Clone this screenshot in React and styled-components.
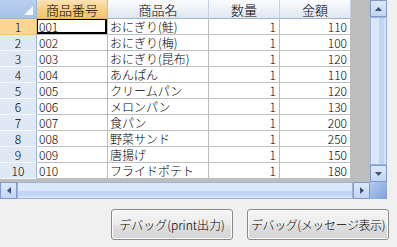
import React from "react";
import styled, { createGlobalStyle } from "styled-components";

const items = [
  ["001", "おにぎり(鮭)", 1, 110],
  ["002", "おにぎり(梅)", 1, 100],
  ["003", "おにぎり(昆布)", 1, 120],
  ["004", "あんぱん", 1, 110],
  ["005", "クリームパン", 1, 120],
  ["006", "メロンパン", 1, 130],
  ["007", "食パン", 1, 200],
  ["008", "野菜サンド", 1, 250],
  ["009", "唐揚げ", 1, 150],
  ["010", "フライドポテト", 1, 180],
];

const columns = ["商品番号", "商品名", "数量", "金額"];

const App = () => {
  return (
    <>
      <GlobalStyle />
      <Form>
        <GridView>
          <GridMain>
            <Table>
              <Corner>
                <CornerMark />
              </Corner>
              {columns.map((c, i) => (
                <ColumnHeader key={c} selected={i === 0}>
                  {c}
                </ColumnHeader>
              ))}
              {items.map((row, r) => (
                <React.Fragment key={row[0]}>
                  <RowHeader selected={r === 0}>{r + 1}</RowHeader>
                  <Cell current={r === 0}>{row[0]}</Cell>
                  <Cell>{row[1]}</Cell>
                  <Cell align="right">{row[2]}</Cell>
                  <Cell align="right">{row[3]}</Cell>
                </React.Fragment>
              ))}
            </Table>
            <VScroll>
              <ArrowButton>
                <Arrow dir="up" />
              </ArrowButton>
              <Thumb vertical />
              <ArrowButton>
                <Arrow dir="down" />
              </ArrowButton>
            </VScroll>
          </GridMain>
          <GridBottom>
            <HScroll>
              <ArrowButton>
                <Arrow dir="left" />
              </ArrowButton>
              <Thumb />
              <ArrowButton>
                <Arrow dir="right" />
              </ArrowButton>
            </HScroll>
            <SizeCorner />
          </GridBottom>
        </GridView>
        <ButtonBar>
          <Button width={122}>デバッグ(print出力)</Button>
          <Button width={142} tight>
            デバッグ(メッセージ表示)
          </Button>
        </ButtonBar>
      </Form>
    </>
  );
};

const Arrow = ({ dir }) => {
  const pts = {
    up: "0,4 7,4 3.5,0",
    down: "0,0 7,0 3.5,4",
    left: "4,0 4,7 0,3.5",
    right: "0,0 0,7 4,3.5",
  }[dir];
  const vertical = dir === "up" || dir === "down";
  return (
    <svg width={vertical ? 7 : 4} height={vertical ? 4 : 7}>
      <polygon points={pts} fill="#3f5274" />
    </svg>
  );
};

const GlobalStyle = createGlobalStyle`
  body {
    margin: 0;
    background: #f0f0f0;
    font-family: "Noto Sans CJK JP", "Noto Sans", sans-serif;
    font-weight: 300;
    font-size: 12px;
    color: #000;
  }
`;

const Form = styled.div`
  width: 397px;
  height: 247px;
  display: flex;
  flex-direction: column;
`;

const GridView = styled.div`
  width: 387px;
  height: 199px;
  display: flex;
  flex-direction: column;
  background: #bdbdbd;
`;

const GridMain = styled.div`
  display: flex;
  height: 182px;
`;

const Table = styled.div`
  flex: 1;
  display: grid;
  grid-template-columns: 37px 71px 101px 71px 71px;
  grid-template-rows: 19px repeat(10, 16px);
  align-content: start;
`;

const Corner = styled.div`
  position: relative;
  background: linear-gradient(#b9cfee, #a6c1e8);
  border-right: 1px solid #9eb6ce;
  border-bottom: 1px solid #9eb6ce;
`;

const CornerMark = styled.div`
  position: absolute;
  right: 3px;
  bottom: 3px;
  width: 0;
  height: 0;
  border-left: 9px solid transparent;
  border-bottom: 9px solid #f4f8fd;
`;

const ColumnHeader = styled.div`
  display: flex;
  align-items: center;
  justify-content: center;
  font-size: 13px;
  line-height: 19px;
  background: ${(p) =>
    p.selected
      ? "linear-gradient(#fbe3b5, #f6cd7f 60%, #f3c46c)"
      : "linear-gradient(#fbfcfe, #eaeff6 60%, #dfe6ef)"};
  border-right: 1px solid ${(p) => (p.selected ? "#f2b650" : "#c5d2e3")};
  border-bottom: 1px solid ${(p) => (p.selected ? "#f2b650" : "#9eb6ce")};
`;

const RowHeader = styled.div`
  display: flex;
  align-items: center;
  justify-content: center;
  line-height: 16px;
  background: ${(p) => (p.selected ? "#fad691" : "#dfe8f5")};
  border-right: 1px solid ${(p) => (p.selected ? "#f2b650" : "#9eb6ce")};
  border-bottom: 1px solid ${(p) => (p.selected ? "#f2c574" : "#f4f7fc")};
`;

const Cell = styled.div`
  display: flex;
  align-items: center;
  justify-content: ${(p) => (p.align === "right" ? "flex-end" : "flex-start")};
  padding: 0 3px 0 2px;
  line-height: 16px;
  white-space: nowrap;
  overflow: hidden;
  background: #fff;
  border-right: 1px solid #bcbcbc;
  border-bottom: 1px solid #bcbcbc;
  box-shadow: ${(p) =>
    p.current ? "inset 0 0 0 1px #000, inset -1px -1px 0 1px #000" : "none"};
`;

const VScroll = styled.div`
  width: 17px;
  display: flex;
  flex-direction: column;
  background: #eef3fc;
`;

const HScroll = styled.div`
  flex: 1;
  display: flex;
  background: #eef3fc;
`;

const ArrowButton = styled.div`
  flex: 0 0 17px;
  height: 17px;
  display: flex;
  align-items: center;
  justify-content: center;
  box-sizing: border-box;
  border: 1px solid #7f9ac8;
  background: linear-gradient(#dde8fa, #c3d5f3);
`;

const Thumb = styled.div`
  flex: 1;
  box-sizing: border-box;
  border: 1px solid #9db3dc;
  background: ${(p) =>
    p.vertical
      ? "linear-gradient(to right, #dbe7fb 0 50%, #c2d5f5 50% 85%, #d5e3fa 85%)"
      : "linear-gradient(#dbe7fb 0 50%, #c2d5f5 50% 85%, #d5e3fa 85%)"};
`;

const GridBottom = styled.div`
  display: flex;
  height: 17px;
`;

const SizeCorner = styled.div`
  width: 17px;
  background: linear-gradient(135deg, #b3cbef, #7f9fd6);
`;

const ButtonBar = styled.div`
  display: flex;
  justify-content: flex-end;
  gap: 14px;
  padding: 10px 8px 0 0;
`;

const Button = styled.div`
  width: ${(p) => p.width}px;
  height: 31px;
  box-sizing: border-box;
  display: flex;
  align-items: center;
  justify-content: center;
  white-space: nowrap;
  font-size: 12px;
  letter-spacing: ${(p) => (p.tight ? "-0.4px" : "0")};
  border: 1px solid #8a8a8a;
  border-radius: 3px;
  background: linear-gradient(#f4f4f4 0%, #ececec 50%, #e0e0e0 51%, #d4d4d4 100%);
  box-shadow: inset 0 0 0 1px #fbfbfb;
`;

export default App;
